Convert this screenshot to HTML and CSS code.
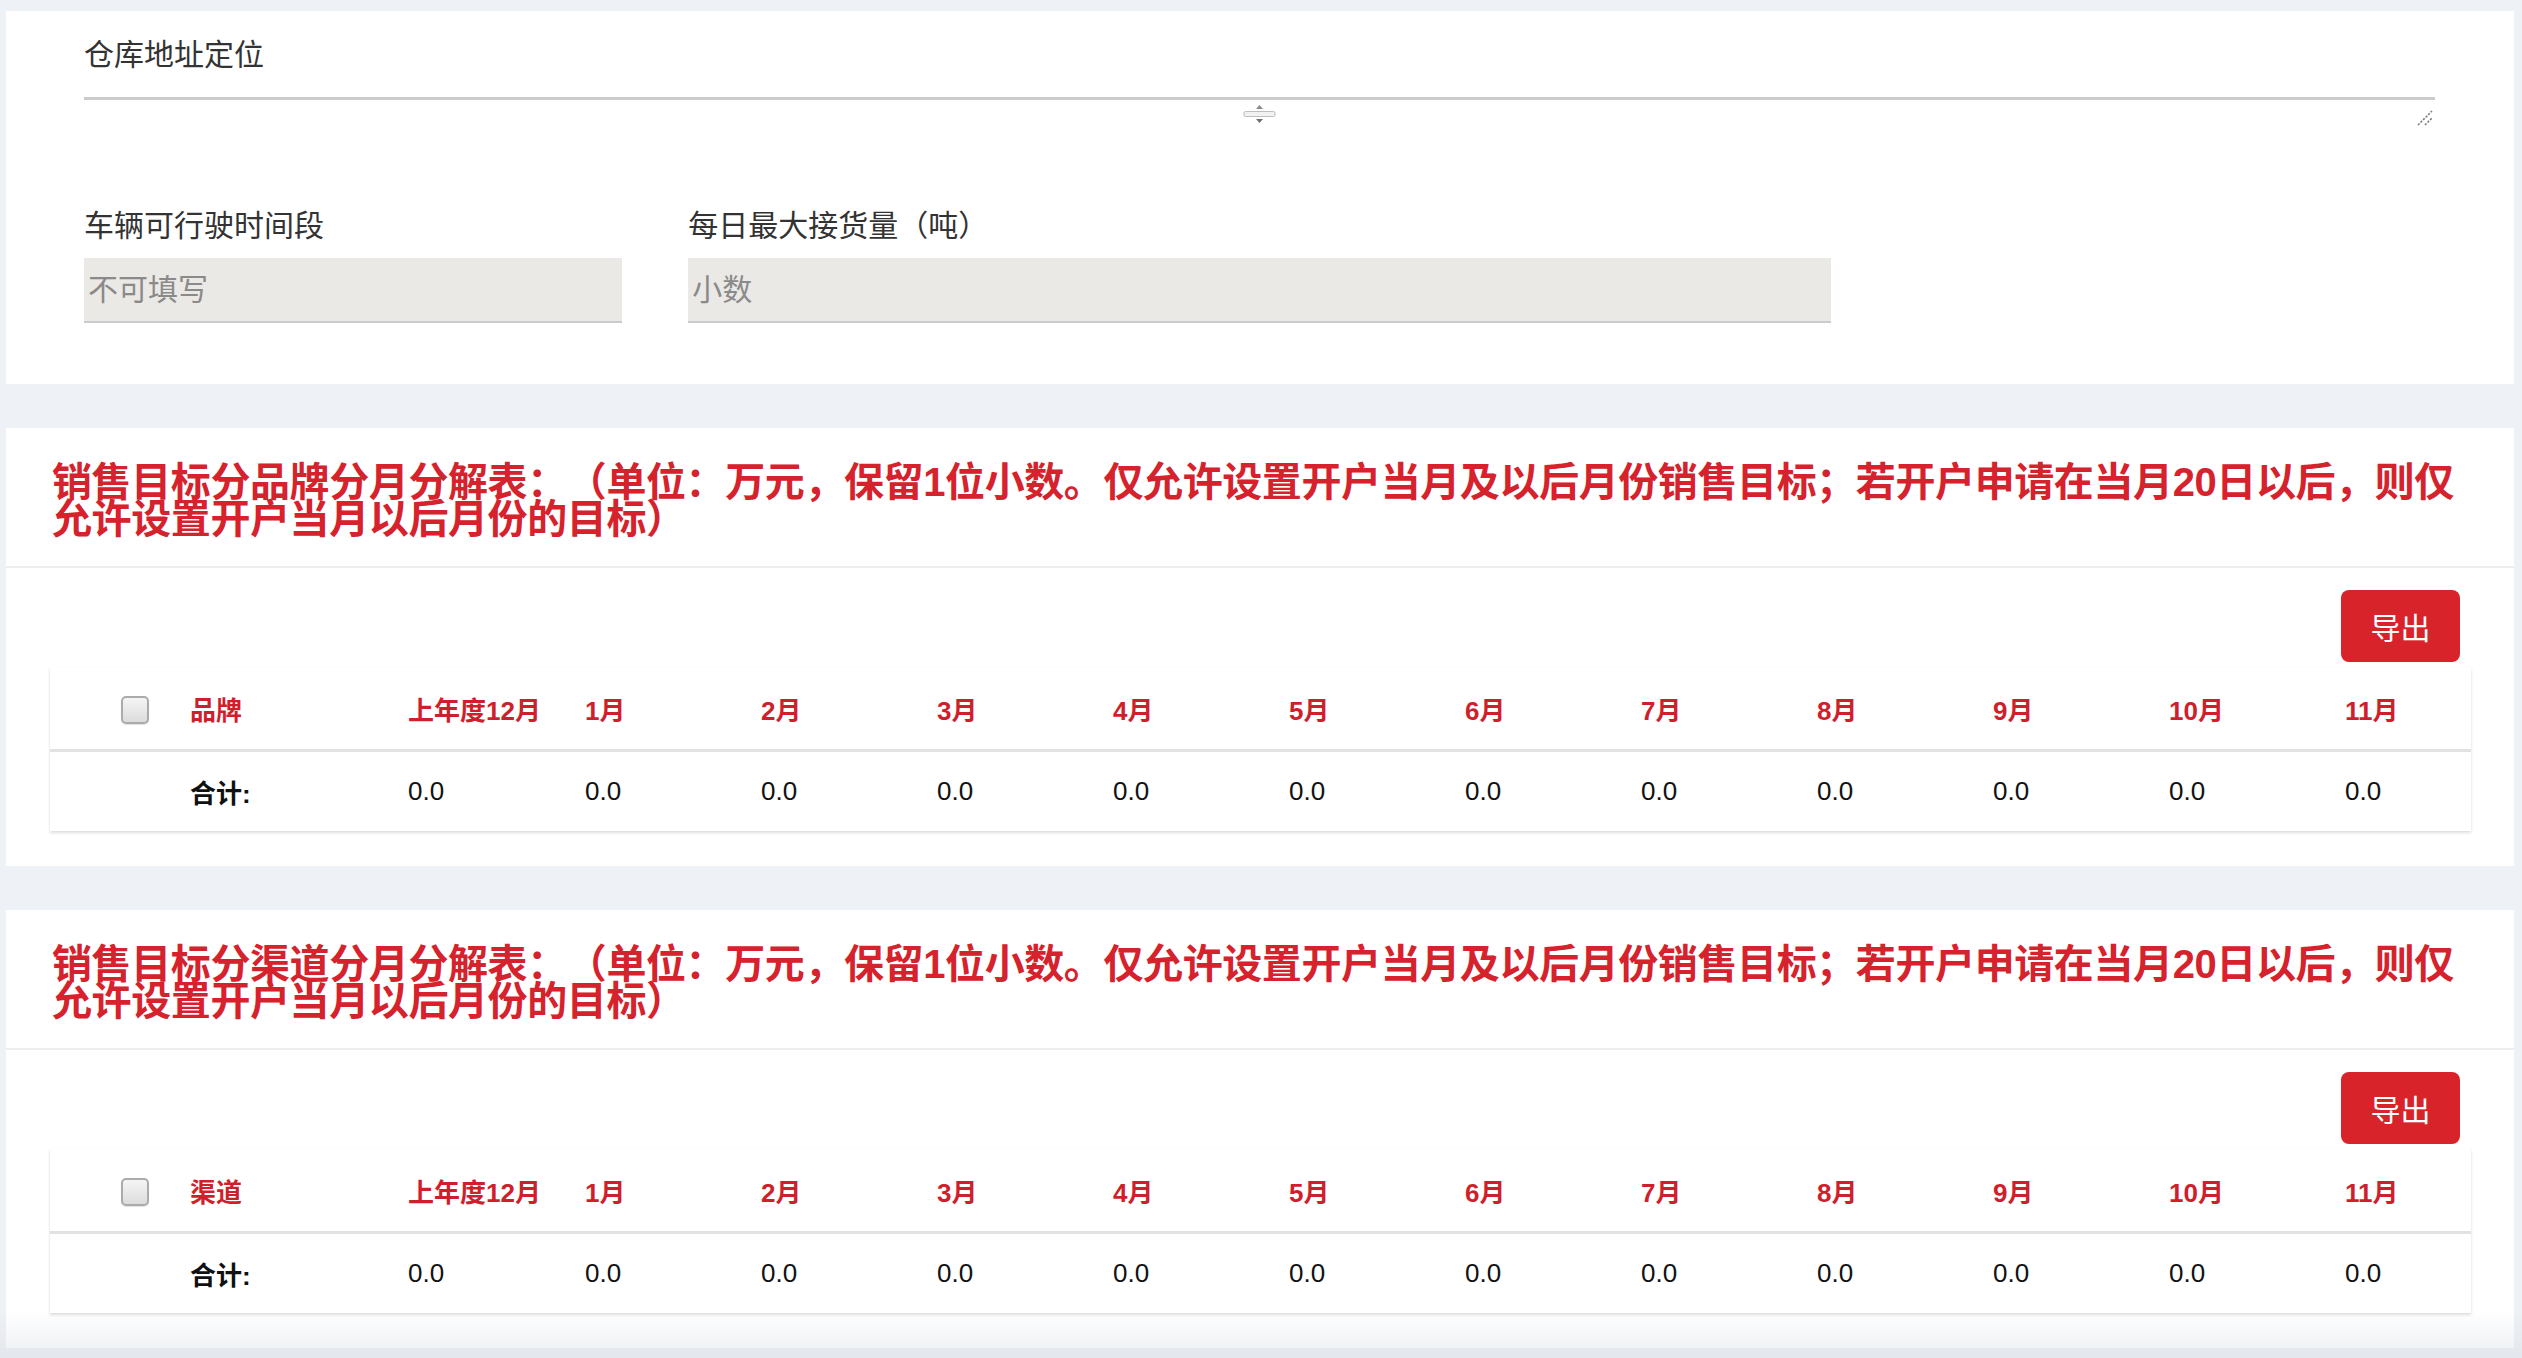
FILE: index.html
```html
<!DOCTYPE html>
<html lang="zh-CN">
<head>
<meta charset="utf-8">
<title>仓库信息</title>
<link rel="stylesheet" href="styles.css">
</head>
<body>
<div class="page">
  <section class="card form-card">
    <div class="field-label">仓库地址定位</div>
    <div class="area-line"></div>
    <div class="area-tools">
      <span></span>
      <svg class="grip" viewBox="0 0 33 20" width="33" height="20">
        <path d="M13 5 L16.5 1 L20 5 Z" fill="#8a8a8a"/>
        <rect x="1" y="7.5" width="31" height="5" rx="1.5" fill="#f1f1f1" stroke="#bdbdbd" stroke-width="1"/>
        <path d="M13 15 L20 15 L16.5 19 Z" fill="#6f6f6f"/>
      </svg>
      <svg class="resize" viewBox="0 0 16 16" width="16" height="16">
        <path d="M1 15 L15 1" stroke="#7d7d7d" stroke-width="1.6" stroke-dasharray="2.2 1.4"/>
        <path d="M8 15 L15 8" stroke="#7d7d7d" stroke-width="1.6" stroke-dasharray="2.2 1.4"/>
      </svg>
    </div>
    <div class="form-grid">
      <div class="field">
        <div class="field-label">车辆可行驶时间段</div>
        <input class="field-input" placeholder="不可填写" readonly>
      </div>
      <div class="field span-2">
        <div class="field-label">每日最大接货量（吨）</div>
        <input class="field-input" placeholder="小数">
      </div>
    </div>
  </section>

  <section class="card table-card">
    <header class="card-head">
      <h3 class="card-title">销售目标分品牌分月分解表：（单位：万元，保留1位小数。仅允许设置开户当月及以后月份销售目标；若开户申请在当月20日以后，则仅允许设置开户当月以后月份的目标）</h3>
    </header>
    <div class="card-body">
      <div class="toolbar"><button class="btn-export" type="button">导出</button></div>
      <table class="data-table">
        <colgroup>
          <col class="w-check"><col class="w-name"><col class="w-prev">
          <col class="w-month"><col class="w-month"><col class="w-month"><col class="w-month"><col class="w-month">
          <col class="w-month"><col class="w-month"><col class="w-month"><col class="w-month"><col class="w-month">
          <col>
        </colgroup>
        <thead>
          <tr>
            <th class="c-check"><span class="check"></span></th>
            <th>品牌</th><th>上年度12月</th><th>1月</th><th>2月</th><th>3月</th><th>4月</th><th>5月</th><th>6月</th><th>7月</th><th>8月</th><th>9月</th><th>10月</th><th>11月</th>
          </tr>
        </thead>
        <tbody>
          <tr>
            <td class="c-check"></td>
            <td class="c-total">合计:</td><td>0.0</td><td>0.0</td><td>0.0</td><td>0.0</td><td>0.0</td><td>0.0</td><td>0.0</td><td>0.0</td><td>0.0</td><td>0.0</td><td>0.0</td><td>0.0</td>
          </tr>
        </tbody>
      </table>
    </div>
  </section>

  <section class="card table-card">
    <header class="card-head">
      <h3 class="card-title">销售目标分渠道分月分解表：（单位：万元，保留1位小数。仅允许设置开户当月及以后月份销售目标；若开户申请在当月20日以后，则仅允许设置开户当月以后月份的目标）</h3>
    </header>
    <div class="card-body">
      <div class="toolbar"><button class="btn-export" type="button">导出</button></div>
      <table class="data-table">
        <colgroup>
          <col class="w-check"><col class="w-name"><col class="w-prev">
          <col class="w-month"><col class="w-month"><col class="w-month"><col class="w-month"><col class="w-month">
          <col class="w-month"><col class="w-month"><col class="w-month"><col class="w-month"><col class="w-month">
          <col>
        </colgroup>
        <thead>
          <tr>
            <th class="c-check"><span class="check"></span></th>
            <th>渠道</th><th>上年度12月</th><th>1月</th><th>2月</th><th>3月</th><th>4月</th><th>5月</th><th>6月</th><th>7月</th><th>8月</th><th>9月</th><th>10月</th><th>11月</th>
          </tr>
        </thead>
        <tbody>
          <tr>
            <td class="c-check"></td>
            <td class="c-total">合计:</td><td>0.0</td><td>0.0</td><td>0.0</td><td>0.0</td><td>0.0</td><td>0.0</td><td>0.0</td><td>0.0</td><td>0.0</td><td>0.0</td><td>0.0</td><td>0.0</td>
          </tr>
        </tbody>
      </table>
    </div>
  </section>
</div>
<div class="bottom-fade"></div>
</body>
</html>
```
FILE: styles.css
```css
* { box-sizing: border-box; }
html, body { margin: 0; padding: 0; }
body {
  background: #eef1f5;
  font-family: "Liberation Sans", "Noto Sans CJK SC", sans-serif;
  color: #333;
  text-spacing-trim: space-all;
}
.page {
  padding: 11px 8px 9px 6px;
  display: flex;
  flex-direction: column;
  gap: 44px;
}
.card { background: #fff; }

/* form card */
.form-card { padding: 23px 79px 61px 78px; }
.field-label { font-size: 30px; line-height: 42px; color: #333; }
.area-line { margin-top: 21px; border-bottom: 3px solid #cbcbcb; }
.area-tools {
  display: grid;
  grid-template-columns: 1fr auto 1fr;
  height: 26px;
}
.grip { display: block; margin-top: 4px; }
.resize { display: block; justify-self: end; margin-top: 10px; margin-right: 2px; }
.form-grid {
  margin-top: 79px;
  display: grid;
  grid-template-columns: repeat(4, 1fr);
  column-gap: 66px;
}
.span-2 { grid-column: span 2; }
.field .field-label { margin-bottom: 11px; }
.field-input {
  display: block;
  width: 100%;
  height: 65px;
  margin: 0;
  border: 0;
  border-bottom: 2px solid #cbcbcb;
  border-radius: 0;
  background: #ebe9e5;
  padding: 0 4px;
  font: 30px "Liberation Sans", "Noto Sans CJK SC", sans-serif;
  color: #333;
  outline: none;
}
.field-input::placeholder { color: #8a8a8a; opacity: 1; }

/* table cards */
.card-head {
  padding: 36px 50px 28px 46px;
  border-bottom: 2px solid #eeeeee;
}
.card-title {
  margin: 0;
  font-size: 40px;
  line-height: 37px;
  font-weight: 700;
  letter-spacing: -0.4px;
  color: #d6222c;
}
.card-body { padding: 22px 43px 35px 44px; }
.toolbar { display: flex; justify-content: flex-end; padding-right: 11px; }
.btn-export {
  width: 119px;
  height: 72px;
  padding: 0;
  border: 0;
  border-radius: 8px;
  background: #d9232b;
  color: #fff;
  font: 30px "Liberation Sans", "Noto Sans CJK SC", sans-serif;
}
.data-table {
  margin-top: 5px;
  width: 100%;
  border-collapse: separate;
  border-spacing: 0;
  table-layout: fixed;
  box-shadow: 0 2px 3px rgba(0, 0, 0, 0.13), 0 0 1px rgba(0, 0, 0, 0.05);
  font-size: 26px;
}
.w-check { width: 122px; }
.w-name { width: 218px; }
.w-prev { width: 177px; }
.w-month { width: 176px; }
.data-table th {
  height: 85px;
  padding: 0 0 0 18px;
  border-bottom: 3px solid #e2e2e2;
  text-align: left;
  vertical-align: middle;
  color: #cf1f2d;
  font-weight: 700;
  white-space: nowrap;
}
.data-table td {
  height: 79px;
  padding: 0 0 0 18px;
  vertical-align: middle;
  color: #111;
  white-space: nowrap;
}
.data-table .c-check { padding-left: 71px; }
.data-table .c-total { font-weight: 700; }
.check {
  display: inline-block;
  vertical-align: middle;
  width: 28px;
  height: 28px;
  border: 2px solid #ababab;
  border-radius: 5px;
  background: linear-gradient(#f5f5f5, #dcdcdc);
  box-shadow: 0 1px 1px rgba(0, 0, 0, 0.12);
}

.bottom-fade {
  position: fixed;
  left: 0;
  right: 0;
  bottom: 0;
  height: 48px;
  background: linear-gradient(rgba(215, 220, 228, 0), rgba(215, 220, 228, 0.45));
  pointer-events: none;
}
```
